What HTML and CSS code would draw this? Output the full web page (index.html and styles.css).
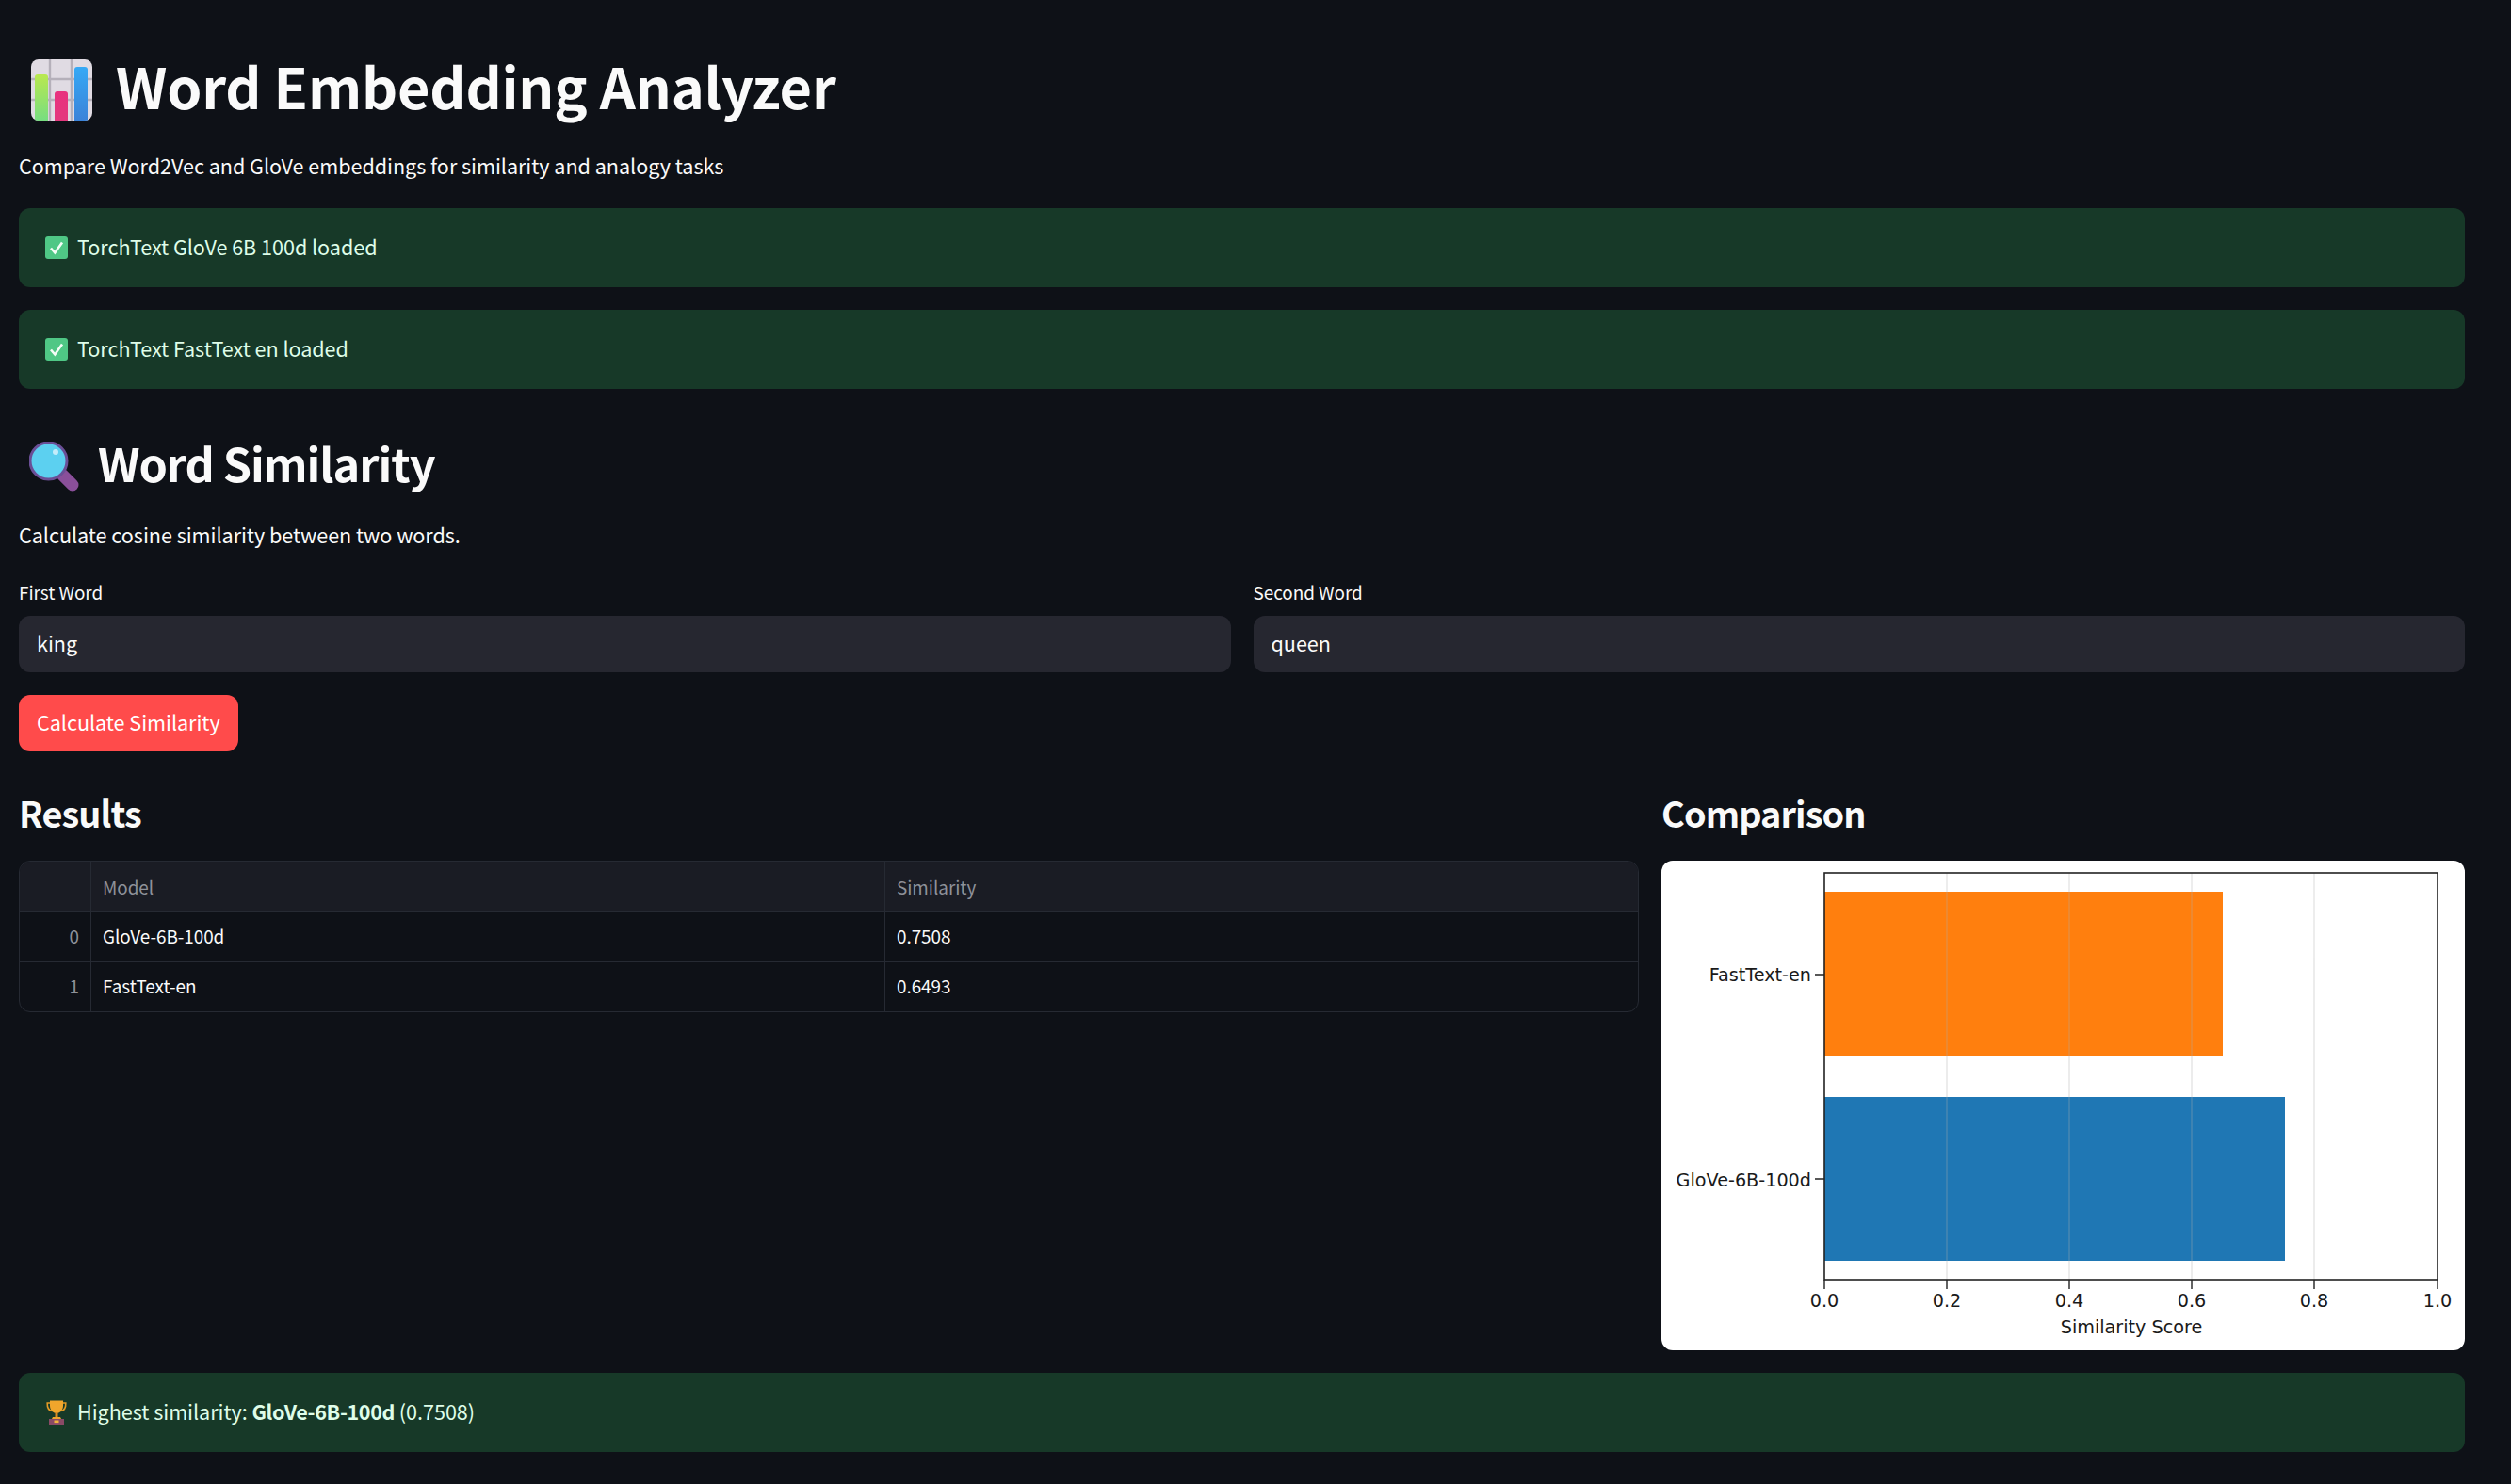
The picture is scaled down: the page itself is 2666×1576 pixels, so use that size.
FILE: index.html
```html
<!DOCTYPE html>
<html lang="en">
<head>
<meta charset="utf-8">
<title>Word Embedding Analyzer</title>
<link rel="stylesheet" href="styles.css">
</head>
<body>
<main class="app">
  <h1 class="title">
    <svg class="emoji-chart" viewBox="0 0 65 65" aria-hidden="true">
      <defs>
        <linearGradient id="g1" x1="0" y1="0" x2="0" y2="1"><stop offset="0" stop-color="#b9e84f"/><stop offset="1" stop-color="#6fdc87"/></linearGradient>
        <linearGradient id="g2" x1="0" y1="0" x2="0" y2="1"><stop offset="0" stop-color="#e8327f"/><stop offset="1" stop-color="#e23a7d"/></linearGradient>
        <linearGradient id="g3" x1="0" y1="0" x2="0" y2="1"><stop offset="0" stop-color="#36a9f5"/><stop offset="1" stop-color="#3a7fd6"/></linearGradient>
        <clipPath id="cb"><rect width="65" height="65" rx="8"/></clipPath>
      </defs>
      <g clip-path="url(#cb)">
        <rect width="65" height="65" fill="#e0dbe3"/>
        <path d="M20 0V65M43 0V65M0 21H65M0 43H65" stroke="#b5b0ba" stroke-width="2.4" fill="none"/>
        <rect x="4" y="16" width="14" height="55" rx="3" fill="url(#g1)"/>
        <rect x="25" y="34" width="14" height="40" rx="3" fill="url(#g2)"/>
        <rect x="46" y="8" width="14" height="62" rx="3" fill="url(#g3)"/>
      </g>
    </svg>
    <span class="lift-title">Word Embedding Analyzer</span>
  </h1>
  <p class="text sub-title">Compare Word2Vec and GloVe embeddings for similarity and analogy tasks</p>

  <div class="alert first-alert">
    <svg class="emoji-check" viewBox="0 0 24 24" aria-hidden="true"><rect width="24" height="24" rx="3" fill="#4fc785"/><path d="M6 12.5l4.3 5L18 6.5" fill="none" stroke="#f4fdf7" stroke-width="2.6"/></svg>
    <span class="alert-text">TorchText GloVe 6B 100d loaded</span>
  </div>
  <div class="alert next-alert">
    <svg class="emoji-check" viewBox="0 0 24 24" aria-hidden="true"><rect width="24" height="24" rx="3" fill="#4fc785"/><path d="M6 12.5l4.3 5L18 6.5" fill="none" stroke="#f4fdf7" stroke-width="2.6"/></svg>
    <span class="alert-text">TorchText FastText en loaded</span>
  </div>

  <h2 class="section">
    <svg class="emoji-glass" viewBox="0 0 53 53" aria-hidden="true">
      <path d="M35 35L46 46" stroke="#8a4f9a" stroke-width="13" stroke-linecap="round"/>
      <circle cx="20.5" cy="20.5" r="19.5" fill="#5cd0f0" stroke="#6a4f96" stroke-width="3"/>
      <circle cx="28" cy="11" r="3" fill="#c4ecfa"/>
    </svg>
    <span class="lift-section">Word Similarity</span>
  </h2>
  <p class="text section-text">Calculate cosine similarity between two words.</p>

  <div class="inputs">
    <label class="field">
      <span class="field-label">First Word</span>
      <input class="field-input" type="text" value="king">
    </label>
    <label class="field">
      <span class="field-label">Second Word</span>
      <input class="field-input" type="text" value="queen">
    </label>
  </div>

  <button class="primary" type="button">Calculate Similarity</button>

  <div class="results">
    <section class="results-left">
      <h3 class="sub-section">Results</h3>
      <div class="frame">
        <div class="row head"><div class="cell idx"></div><div class="cell model">Model</div><div class="cell score">Similarity</div></div>
        <div class="row"><div class="cell idx">0</div><div class="cell model">GloVe-6B-100d</div><div class="cell score">0.7508</div></div>
        <div class="row"><div class="cell idx">1</div><div class="cell model">FastText-en</div><div class="cell score">0.6493</div></div>
      </div>
    </section>
    <section class="results-right">
      <h3 class="sub-section">Comparison</h3>
      <svg class="chart" viewBox="0 0 853 520" role="img" aria-label="Similarity score bar chart">
        <rect x="173" y="33" width="423" height="174" fill="#ff7f0e"/>
        <rect x="173" y="251" width="489" height="174" fill="#1f77b4"/>
        <g class="grid">
          <path d="M303 13V445M433 13V445M563 13V445M693 13V445"/>
        </g>
        <rect x="173" y="13" width="651" height="432" class="axes"/>
        <g class="ticks">
          <path d="M163 121H173M163 338H173M173 445V455M303 445V455M433 445V455M563 445V455M693 445V455M824 445V455"/>
        </g>
        <g class="chart-text">
          <text x="159" y="128" text-anchor="end">FastText-en</text>
          <text x="159" y="346" text-anchor="end">GloVe-6B-100d</text>
          <text x="173" y="474" text-anchor="middle">0.0</text>
          <text x="303" y="474" text-anchor="middle">0.2</text>
          <text x="433" y="474" text-anchor="middle">0.4</text>
          <text x="563" y="474" text-anchor="middle">0.6</text>
          <text x="693" y="474" text-anchor="middle">0.8</text>
          <text x="824" y="474" text-anchor="middle">1.0</text>
          <text x="499" y="502" text-anchor="middle">Similarity Score</text>
        </g>
      </svg>
    </section>
  </div>

  <div class="alert next-alert">
    <svg class="emoji-trophy" viewBox="0 0 24 26" aria-hidden="true">
      <path d="M5 3H2.2C2 8 4 11 7.5 11.5M19 3h2.8C22 8 20 11 16.5 11.5" fill="none" stroke="#e39a25" stroke-width="1.6"/>
      <path d="M5 0.5H19V6C19 11 15 14 12 14C9 14 5 11 5 6Z" fill="#f0a62c"/>
      <rect x="10.5" y="13" width="3" height="5" fill="#d98a22"/>
      <path d="M8 18H16L17 20H7Z" fill="#efa52e"/>
      <rect x="4" y="20" width="16" height="6" fill="#8a4a66"/>
      <rect x="9.5" y="21.5" width="5" height="2.6" fill="#f3b33d"/>
    </svg>
    <span class="alert-text">Highest similarity: <strong>GloVe-6B-100d</strong> (0.7508)</span>
  </div>
</main>
</body>
</html>
```

FILE: styles.css
```css
* { box-sizing: border-box; }
html, body { margin: 0; padding: 0; }
body {
  background: #0e1117;
  color: #fafafa;
  font-family: "Noto Sans CJK SC", "Noto Sans", sans-serif;
  font-size: 21.6px;
  letter-spacing: -.002em;
  height: 1576px;
  overflow: hidden;
}
.app { padding: 50px 49px 0 20px; }
.title {
  margin: 0;
  display: flex;
  align-items: center;
  gap: 25px;
  padding-left: 13px;
  height: 90px;
  font-size: 59.4px;
  line-height: 90px;
  font-weight: 700;
  letter-spacing: -.003em;
}
.lift-title { padding-bottom: 10px; }
.emoji-chart { width: 65px; height: 65px; flex: none; }
.text { margin: 0; line-height: 36px; }
.sub-title { margin-top: 18px; }
.alert {
  display: flex;
  align-items: center;
  gap: 10px;
  height: 84px;
  padding: 0 28px;
  background: #173928;
  border-radius: 12px;
  color: #dffde9;
  line-height: 36px;
}
.alert-text { padding-bottom: 2px; }
.alert strong { font-weight: 700; letter-spacing: -.018em; }
.first-alert { margin-top: 27px; }
.next-alert { margin-top: 24px; }
.emoji-check { width: 24px; height: 24px; flex: none; }
.emoji-trophy { width: 24px; height: 26px; flex: none; }
.section {
  margin: 47px 0 0;
  display: flex;
  align-items: center;
  gap: 20px;
  padding-left: 11px;
  height: 70px;
  font-size: 48.6px;
  line-height: 70px;
  font-weight: 600;
  letter-spacing: -.021em;
}
.lift-section { padding-bottom: 8px; }
.emoji-glass { width: 53px; height: 53px; flex: none; }
.section-text { margin-top: 20px; }
.inputs { display: flex; gap: 24px; margin-top: 28px; }
.field { flex: 1; display: flex; flex-direction: column; }
.field-label { font-size: 18.9px; line-height: 30px; margin-bottom: 10px; }
.field-input {
  height: 60px;
  width: 100%;
  border: 0;
  border-radius: 12px;
  padding: 0 19px 3px;
  background: #262730;
  color: #fafafa;
  font: inherit;
  letter-spacing: inherit;
  outline: none;
}
.primary {
  display: block;
  margin-top: 24px;
  height: 60px;
  padding: 0 19px 3px;
  border: 0;
  border-radius: 12px;
  background: #ff4b4b;
  color: #fff;
  font: inherit;
  letter-spacing: inherit;
}
.results { display: flex; gap: 24px; margin-top: 0; }
.results-left { flex: 1; min-width: 0; }
.results-right { flex: none; width: 853px; }
.sub-section {
  margin: 40px 0 26px;
  height: 50px;
  font-size: 37.8px;
  line-height: 50px;
  font-weight: 600;
  letter-spacing: -.024em;
}
.frame {
  border: 1px solid #262a33;
  border-radius: 12px;
  overflow: hidden;
  font-size: 18.9px;
}
.row { display: flex; height: 53px; border-bottom: 1px solid #262a33; }
.row:last-child { border-bottom: 0; height: 52px; }
.head { background: #1a1c24; color: #8e9199; height: 54px; border-bottom-width: 2px; }
.cell { display: flex; align-items: center; padding: 0 12px 3px; border-right: 1px solid #262a33; }
.head .cell { padding-bottom: 0; }
.idx { width: 76px; justify-content: flex-end; color: #8e9199; }
.model { width: 843px; }
.score { flex: 1; border-right: 0; }
.chart { display: block; width: 853px; height: 520px; background: #fff; border-radius: 12px; }
.grid path { stroke: #b0b0b0; stroke-opacity: .3; stroke-width: 1.5; fill: none; }
.axes { fill: none; stroke: #222; stroke-width: 1.6; }
.ticks path { stroke: #222; stroke-width: 1.4; fill: none; }
.chart-text text { font-family: "DejaVu Sans", sans-serif; font-size: 19.2px; letter-spacing: 0; fill: #1a1a1a; }
```
